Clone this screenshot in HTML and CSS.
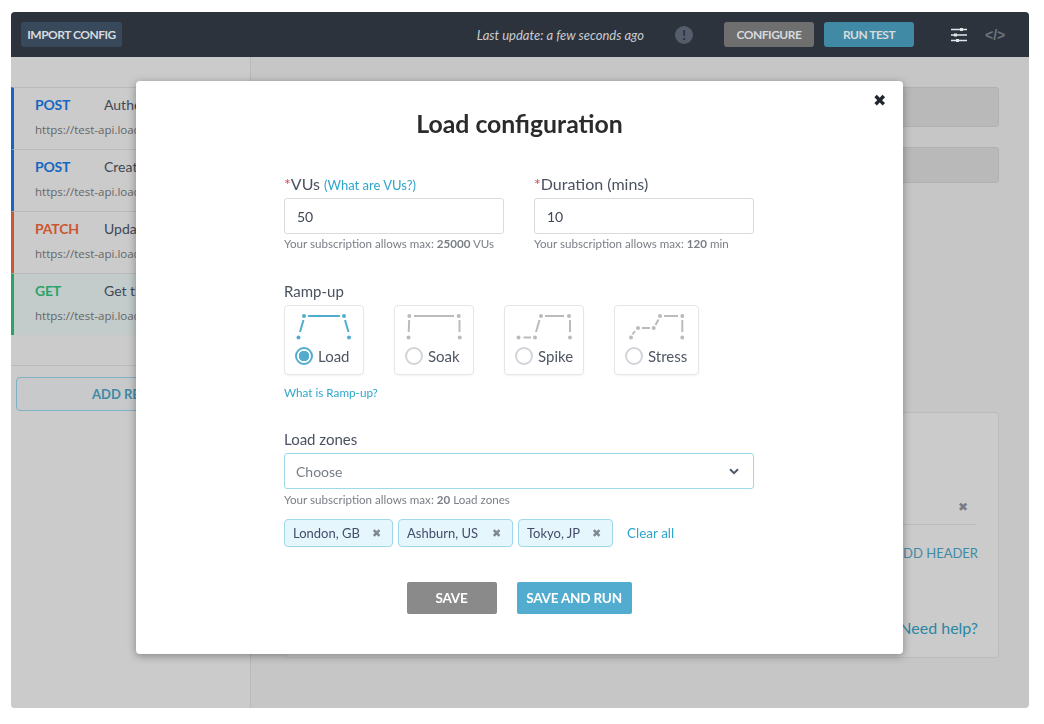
FILE: index.html
```html
<!DOCTYPE html>
<html lang="en">
<head>
    <meta charset="UTF-8">
    <title>Load configuration</title>
    <link rel="stylesheet" href="styles.css">
</head>
<body>
    <div class="app">
        <header class="topbar">
            <button class="btn btn-import">IMPORT CONFIG</button>
            <span class="last-update">Last update: a few seconds ago</span>
            <span class="info-dot">!</span>
            <button class="btn btn-configure">CONFIGURE</button>
            <button class="btn btn-run">RUN TEST</button>
            <svg class="icon-sliders" width="18" height="16" viewBox="0 0 18 16">
                <path d="M1 2.5h16M1 8h16M1 13.5h16" stroke="#e4e7ea" stroke-width="1.3" fill="none"/>
                <path d="M10 1h3v3h-3zM4 6.5h3v3H4zM6 12h3v3H6z" fill="#e4e7ea"/>
            </svg>
            <span class="code-tag">&lt;/&gt;</span>
        </header>
        <div class="workspace">
            <aside class="sidebar">
                <div class="req-list">
                    <div class="req req-post"><div class="req-top"><b>POST</b><span>Authenticate user</span></div><div class="req-url">https://test-api.loadimpact.com/auth</div></div>
                    <div class="req req-post"><div class="req-top"><b>POST</b><span>Create a croc</span></div><div class="req-url">https://test-api.loadimpact.com/crocs</div></div>
                    <div class="req req-patch"><div class="req-top"><b>PATCH</b><span>Update the croc</span></div><div class="req-url">https://test-api.loadimpact.com/crocs</div></div>
                    <div class="req req-get"><div class="req-top"><b>GET</b><span>Get the crocs</span></div><div class="req-url">https://test-api.loadimpact.com/crocs</div></div>
                </div>
                <button class="add-request">ADD REQUEST</button>
            </aside>
            <main class="main">
                <div class="ghost-field ghost-one"></div>
                <div class="ghost-field ghost-two"></div>
                <section class="ghost-panel">
                    <div class="ghost-row"><span class="ghost-x">✖</span></div>
                    <div class="ghost-add">ADD HEADER</div>
                    <div class="ghost-help">Need help?</div>
                </section>
            </main>
        </div>
    </div>

    <div class="modal">
        <span class="modal-close">✖</span>
        <h1>Load configuration</h1>
        <div class="form-body">
            <div class="two-cols">
                <div class="col">
                    <label class="lbl"><i>*</i>VUs <a class="link-small link-vus">(What are VUs?)</a></label>
                    <input class="field" type="text" value="50">
                    <p class="hint">Your subscription allows max: <b>25000</b> VUs</p>
                </div>
                <div class="col">
                    <label class="lbl"><i>*</i>Duration (mins)</label>
                    <input class="field" type="text" value="10">
                    <p class="hint">Your subscription allows max: <b>120</b> min</p>
                </div>
            </div>

            <div class="lbl lbl-ramp">Ramp-up</div>
            <div class="ramps">
                <div class="ramp ramp-on">
                    <svg width="60" height="30" viewBox="0 0 60 30">
                        <path d="M6 21 9.5 9M14 5H46M51 9 54.5 21" stroke="#52accf" stroke-width="2" fill="none"/>
                        <circle cx="4.5" cy="26.5" r="2"/><circle cx="10" cy="5" r="2"/><circle cx="50" cy="5" r="2"/><circle cx="55" cy="26.5" r="2"/>
                    </svg>
                    <div class="ramp-name"><span class="radio"></span>Load</div>
                </div>
                <div class="ramp">
                    <svg width="60" height="30" viewBox="0 0 60 30">
                        <path d="M4.7 21 5.2 9M10 5H50M55.5 9V21" stroke="#bbb" stroke-width="2" fill="none"/>
                        <circle cx="4.5" cy="26.5" r="2"/><circle cx="5.3" cy="5" r="2"/><circle cx="54.7" cy="5" r="2"/><circle cx="55.7" cy="26.5" r="2"/>
                    </svg>
                    <div class="ramp-name"><span class="radio"></span>Soak</div>
                </div>
                <div class="ramp">
                    <svg width="60" height="30" viewBox="0 0 60 30">
                        <path d="M9.5 26.5H17M22 21 25.5 9M31 5H50M56 9V21" stroke="#bbb" stroke-width="2" fill="none"/>
                        <circle cx="4.5" cy="26.5" r="2"/><circle cx="21" cy="26.5" r="2"/><circle cx="27" cy="5" r="2"/><circle cx="55" cy="5" r="2"/><circle cx="56" cy="26.5" r="2"/>
                    </svg>
                    <div class="ramp-name"><span class="radio"></span>Spike</div>
                </div>
                <div class="ramp ramp-wide">
                    <svg width="60" height="30" viewBox="0 0 60 30">
                        <path d="M8.5 23.5 11 20M18 17H26M31.5 14 34.5 8.5M40 5H54M58.3 9V21" stroke="#bbb" stroke-width="2" fill="none"/>
                        <circle cx="7" cy="26.5" r="2"/><circle cx="14" cy="17" r="2"/><circle cx="29.7" cy="17" r="2"/><circle cx="36" cy="5" r="2"/><circle cx="58.3" cy="5" r="2"/><circle cx="58.3" cy="26.5" r="2"/>
                    </svg>
                    <div class="ramp-name"><span class="radio"></span>Stress</div>
                </div>
            </div>
            <a class="link-small link-ramp">What is Ramp-up?</a>

            <div class="lbl lbl-zones">Load zones</div>
            <div class="select">
                <span>Choose</span>
                <svg width="10" height="7" viewBox="0 0 10 7"><path d="M1 1.2 5 5.2 9 1.2" stroke="#4f5a68" stroke-width="2" fill="none"/></svg>
            </div>
            <p class="hint hint-zones">Your subscription allows max: <b>20</b> Load zones</p>
            <div class="tags">
                <span class="tag">London, GB<i>✖</i></span>
                <span class="tag">Ashburn, US<i>✖</i></span>
                <span class="tag">Tokyo, JP<i>✖</i></span>
                <a class="clear-all">Clear all</a>
            </div>
            <div class="actions">
                <button class="btn-save">SAVE</button>
                <button class="btn-save btn-save-run">SAVE AND RUN</button>
            </div>
        </div>
    </div>
</body>
</html>
```

FILE: styles.css
```css
* {
    box-sizing: border-box;
}
body {
    font-family: Lato, "Open Sans", sans-serif;
    background-color: #ffffff;
    color: #3f4756;
    margin: 0;
    padding: 12px 15px 16px 11px;
    height: 724px;
    overflow: hidden;
}
button {
    font-family: inherit;
}
.app {
    height: 696px;
    border-radius: 4px;
    overflow: hidden;
    display: flex;
    flex-direction: column;
    background-color: #c6c6c6;
}
.topbar {
    height: 45px;
    background-color: #2c333d;
    display: flex;
    align-items: center;
    padding: 0 24px 0 10px;
    flex: none;
}
.btn {
    height: 25px;
    border: 0;
    border-radius: 3px;
    font-size: 12px;
    font-weight: 700;
    letter-spacing: -0.5px;
    color: #d7dadd;
    padding: 0;
}
.btn-import {
    width: 101px;
    background-color: #39495c;
}
.last-update {
    margin-left: auto;
    font-style: italic;
    font-size: 13px;
    color: #c9ccd0;
}
.info-dot {
    width: 18px;
    height: 18px;
    margin-left: 31px;
    border-radius: 50%;
    background-color: #545d69;
    color: #2c333d;
    font-size: 13px;
    font-weight: 900;
    text-align: center;
    line-height: 18px;
}
.btn-configure {
    width: 90px;
    margin-left: 31px;
    background-color: #6f6f6f;
}
.btn-run {
    width: 90px;
    margin-left: 10px;
    background-color: #418aa6;
}
.icon-sliders {
    margin-left: 36px;
}
.code-tag {
    margin-left: 17px;
    width: 20px;
    font-family: "Liberation Sans", sans-serif;
    font-size: 14px;
    font-weight: 700;
    color: #6b7480;
}
.workspace {
    flex: 1;
    display: flex;
    min-height: 0;
}
.sidebar {
    width: 240px;
    padding-top: 30px;
    background-color: #cbcbcb;
    border-right: 1px solid #b9b9b9;
}
.req-list {
    height: 279px;
    border-bottom: 1px solid #bcbcbc;
}
.req {
    height: 62px;
    padding: 8px 0 0 21px;
    border-top: 1px solid #bababa;
    border-left: 3px solid #1567c0;
    white-space: nowrap;
    overflow: hidden;
}
.req-top {
    display: flex;
    font-size: 14px;
    line-height: 18px;
}
.req-top b {
    width: 69px;
    flex: none;
    letter-spacing: -0.2px;
    color: #1567c0;
}
.req-url {
    margin-top: 8px;
    font-family: "Open Sans", sans-serif;
    font-size: 11.5px;
    line-height: 16px;
    color: #666;
}
.req-patch {
    border-left-color: #cb5630;
}
.req-patch .req-top b {
    color: #cb5630;
}
.req-get {
    border-left-color: #2aa466;
    background-color: #c3cbcb;
}
.req-get .req-top b {
    color: #2aa466;
}
.add-request {
    display: block;
    width: 222px;
    height: 34px;
    margin: 11px 0 0 5px;
    padding: 0 0 0 75px;
    border: 1px solid #7fb0c6;
    border-radius: 4px;
    background-color: #c7c9cb;
    color: #418aa6;
    font-size: 13px;
    font-weight: 700;
    text-align: left;
}
.main {
    flex: 1;
    padding: 30px 30px 0 34px;
}
.ghost-field {
    height: 40px;
    border: 1px solid #b0b0b0;
    border-radius: 3px;
    background-color: #b9b9b9;
}
.ghost-two {
    height: 36px;
    margin-top: 20px;
}
.ghost-panel {
    height: 246px;
    margin-top: 229px;
    border: 1px solid #bcbcbc;
    border-radius: 4px;
    background-color: #cbcbcb;
    padding: 0 20px 0 0;
    text-align: right;
}
.ghost-row {
    height: 112px;
    margin-right: 2px;
    padding-top: 82px;
    border-bottom: 1px solid #bcbcbc;
}
.ghost-x {
    font-size: 12px;
    color: #777c84;
    margin-right: 8px;
}
.ghost-add {
    margin-top: 20px;
    font-size: 13px;
    color: #418aa6;
}
.ghost-help {
    margin-top: 57px;
    font-size: 16px;
    color: #2a87a5;
}
.modal {
    position: fixed;
    left: 136px;
    top: 81px;
    width: 767px;
    height: 573px;
    background-color: #ffffff;
    border-radius: 4px;
    box-shadow: 0 2px 8px rgba(0, 0, 0, 0.35);
}
.modal-close {
    position: absolute;
    top: 9px;
    right: 17px;
    font-size: 16px;
    color: #22262c;
}
.modal h1 {
    margin: 26px 0 0;
    text-align: center;
    font-size: 24.8px;
    line-height: 34px;
    font-weight: 700;
    color: #2b2b2b;
}
.form-body {
    width: 470px;
    margin: 33px 0 0 148px;
}
.two-cols {
    display: flex;
    gap: 30px;
}
.col {
    width: 220px;
}
.lbl {
    display: block;
    height: 20px;
    font-size: 16px;
    line-height: 20px;
    color: #4a5260;
}
.lbl i {
    color: #e0414f;
    font-style: normal;
}
.link-small {
    font-size: 11.7px;
    color: #2ea6cb;
}
.link-vus {
    font-size: 13px;
}
.field {
    display: block;
    width: 220px;
    height: 36px;
    margin-top: 4px;
    padding: 0 12px;
    border: 1px solid #d8dbe0;
    border-radius: 3px;
    font-family: inherit;
    font-size: 14px;
    color: #3f4756;
}
.hint {
    margin: 2px 0 0;
    font-size: 11.6px;
    line-height: 16px;
    color: #7a7f87;
}
.hint-zones {
    margin-top: 3px;
}
.lbl-ramp {
    margin-top: 29px;
    font-size: 15px;
}
.ramps {
    display: flex;
    gap: 30px;
    margin-top: 4px;
}
.ramp {
    width: 80px;
    height: 70px;
    border: 1px solid #e4e6ea;
    border-radius: 4px;
    box-shadow: 0 1px 2px rgba(0, 0, 0, 0.05);
}
.ramp-wide {
    width: 85px;
}
.ramp svg {
    display: block;
    margin: 5px 0 0 9px;
    fill: #bbb;
}
.ramp-on svg {
    fill: #52accf;
}
.ramp-name {
    display: flex;
    align-items: center;
    gap: 5px;
    margin: 6px 0 0 10px;
    font-size: 15px;
    line-height: 18px;
    color: #4f5763;
}
.radio {
    width: 18px;
    height: 18px;
    border: 2px solid #d1d4d9;
    border-radius: 50%;
    flex: none;
}
.ramp-on .radio {
    border-color: #52accf;
    background: radial-gradient(circle, #52accf 5px, #ffffff 5.5px);
}
.link-ramp {
    display: block;
    margin-top: 9px;
    line-height: 16px;
}
.lbl-zones {
    margin-top: 29px;
    font-size: 15px;
}
.select {
    display: flex;
    justify-content: space-between;
    align-items: center;
    height: 36px;
    margin-top: 4px;
    padding: 0 14px 0 11px;
    border: 1px solid #9ed8ea;
    border-radius: 3px;
    font-size: 14px;
    color: #777d86;
}
.tags {
    display: flex;
    align-items: center;
    gap: 5px;
    margin-top: 11px;
}
.tag {
    display: flex;
    justify-content: space-between;
    align-items: center;
    height: 28px;
    padding: 0 11px 0 8px;
    border: 1px solid #9ed8ea;
    border-radius: 4px;
    background-color: #e5f6fd;
    font-size: 13px;
    color: #454c6a;
}
.tag:nth-child(1) {
    width: 109px;
}
.tag:nth-child(2) {
    width: 115px;
}
.tag:nth-child(3) {
    width: 95px;
}
.tag i {
    font-style: normal;
    font-size: 11px;
    color: #7f868f;
}
.clear-all {
    margin-left: 9px;
    font-size: 13.5px;
    color: #2ea6cb;
}
.actions {
    display: flex;
    justify-content: center;
    gap: 20px;
    margin-top: 35px;
}
.btn-save {
    width: 90px;
    height: 32px;
    border: 0;
    border-radius: 2px;
    background-color: #8a8a8a;
    color: #ffffff;
    font-size: 13.5px;
    font-weight: 700;
    letter-spacing: -0.2px;
}
.btn-save-run {
    width: 115px;
    background-color: #52accf;
}
```
